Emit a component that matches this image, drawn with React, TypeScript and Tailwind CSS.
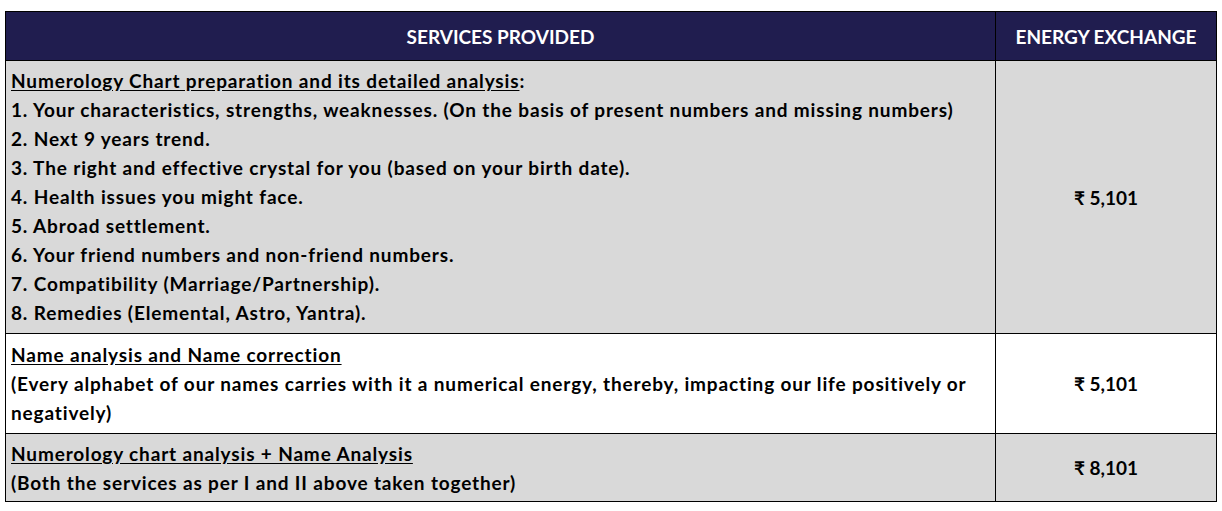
const items = [
  "1. Your characteristics, strengths, weaknesses. (On the basis of present numbers and missing numbers)",
  "2. Next 9 years trend.",
  "3. The right and effective crystal for you (based on your birth date).",
  "4. Health issues you might face.",
  "5. Abroad settlement.",
  "6. Your friend numbers and non-friend numbers.",
  "7. Compatibility (Marriage/Partnership).",
  "8. Remedies (Elemental, Astro, Yantra).",
];

const Price = ({ value }: { value: string }) => (
  <td className="border border-black text-center align-middle">{value}</td>
);

export default function App() {
  return (
    <div className="w-[1222px] h-[511px] bg-white pt-[11px] pl-[5px]">
      <table
        className="border-collapse text-[19px] font-bold text-black leading-[29px]"
        style={{ fontFamily: "Lato, 'Noto Sans', sans-serif" }}
      >
        <thead>
          <tr className="h-[49px] bg-[#201d4f] text-white">
            <th className="w-[990px] border border-black font-bold text-center">SERVICES PROVIDED</th>
            <th className="w-[221px] border border-black font-bold text-center">ENERGY EXCHANGE</th>
          </tr>
        </thead>
        <tbody>
          <tr className="h-[273px] bg-[#d9d9d9]">
            <td className="border border-black px-[5px] align-top pt-[5px] tracking-[0.85px]">
              <div>
                <span className="underline underline-offset-2">Numerology Chart preparation and its detailed analysis</span>:
              </div>
              {items.map((t) => (
                <div key={t}>{t}</div>
              ))}
            </td>
            <Price value="₹ 5,101" />
          </tr>
          <tr className="h-[100px] bg-white">
            <td className="border border-black px-[5px] align-top pt-[6px] tracking-[0.85px]">
              <div className="underline underline-offset-2">Name analysis and Name correction</div>
              <div>
                (Every alphabet of our names carries with it a numerical energy, thereby, impacting our life positively or negatively)
              </div>
            </td>
            <Price value="₹ 5,101" />
          </tr>
          <tr className="h-[68px] bg-[#d9d9d9]">
            <td className="border border-black px-[5px] align-top pt-[5px] tracking-[0.85px]">
              <div className="underline underline-offset-2">Numerology chart analysis + Name Analysis</div>
              <div>(Both the services as per I and II above taken together)</div>
            </td>
            <Price value="₹ 8,101" />
          </tr>
        </tbody>
      </table>
    </div>
  );
}
